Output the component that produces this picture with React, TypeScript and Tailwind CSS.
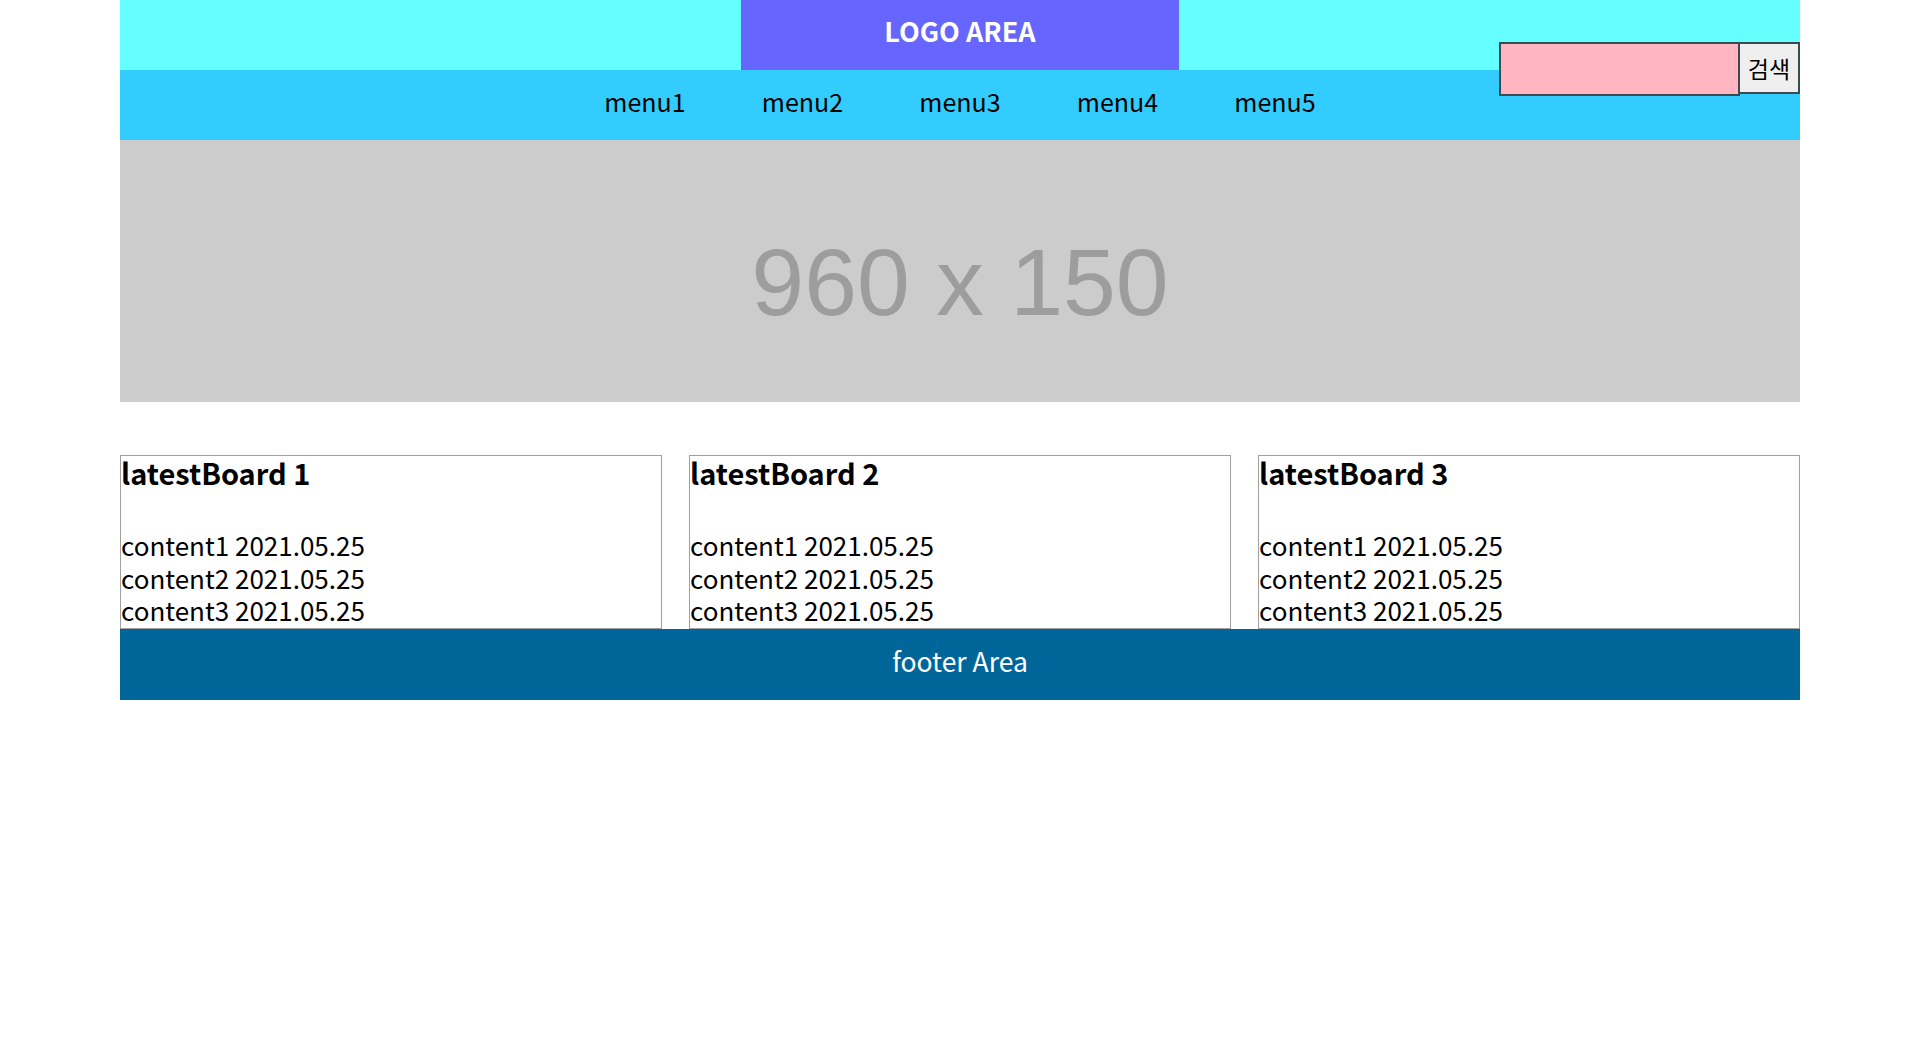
export default function App() {
	const menus = ["menu1", "menu2", "menu3", "menu4", "menu5"]
	const boards = [1, 2, 3]

	return (
		<div
			className="w-[1680px] mx-auto text-black"
			style={{ fontFamily: '"Noto Sans CJK KR", "Noto Sans", sans-serif' }}
		>
			<header className="relative h-[70px] bg-[#66ffff]">
				<div className="w-[438px] h-full mx-auto bg-[#6666ff] flex items-center justify-center pb-[8px]">
					<h1 className="text-[27px] font-bold text-white">LOGO AREA</h1>
				</div>
				<div className="absolute right-0 top-[42px] z-10 flex items-start">
					<input
						type="text"
						className="w-[241px] h-[54px] bg-[#ffb6c1] border-2 border-[#3b4a50] outline-none"
					/>
					<button className="w-[60px] h-[52px] bg-[#efefef] border-2 border-[#3b4a50] border-l-0 text-[23px] leading-none">
						검색
					</button>
				</div>
			</header>

			<nav className="h-[70px] bg-[#33ccff] flex justify-center">
				{menus.map((m) => (
					<a
						key={m}
						className="w-[157.5px] flex items-center justify-center pb-[7px] text-[25px]"
					>
						{m}
					</a>
				))}
			</nav>

			<div className="h-[262px] bg-[#cccccc] flex items-center justify-center pt-[22px]">
				<span
					className="text-[95px] text-[#9d9d9d]"
					style={{ fontFamily: '"Liberation Sans", Arial, sans-serif' }}
				>
					960 x 150
				</span>
			</div>

			<section className="mt-[53px] flex justify-between">
				{boards.map((n) => (
					<div
						key={n}
						className="w-[542px] h-[174px] border border-[#a0a0a0]"
					>
						<h3 className="text-[29px] font-bold leading-[34px] -mt-[1px] mb-[40px]">
							latestBoard {n}
						</h3>
						<ul className="text-[26px] leading-[32.5px]">
							<li>content1 2021.05.25</li>
							<li>content2 2021.05.25</li>
							<li>content3 2021.05.25</li>
						</ul>
					</div>
				))}
			</section>

			<footer className="h-[71px] bg-[#006699] flex items-center justify-center pb-[7px]">
				<p className="text-[26.5px] text-white">footer Area</p>
			</footer>
		</div>
	)
}
